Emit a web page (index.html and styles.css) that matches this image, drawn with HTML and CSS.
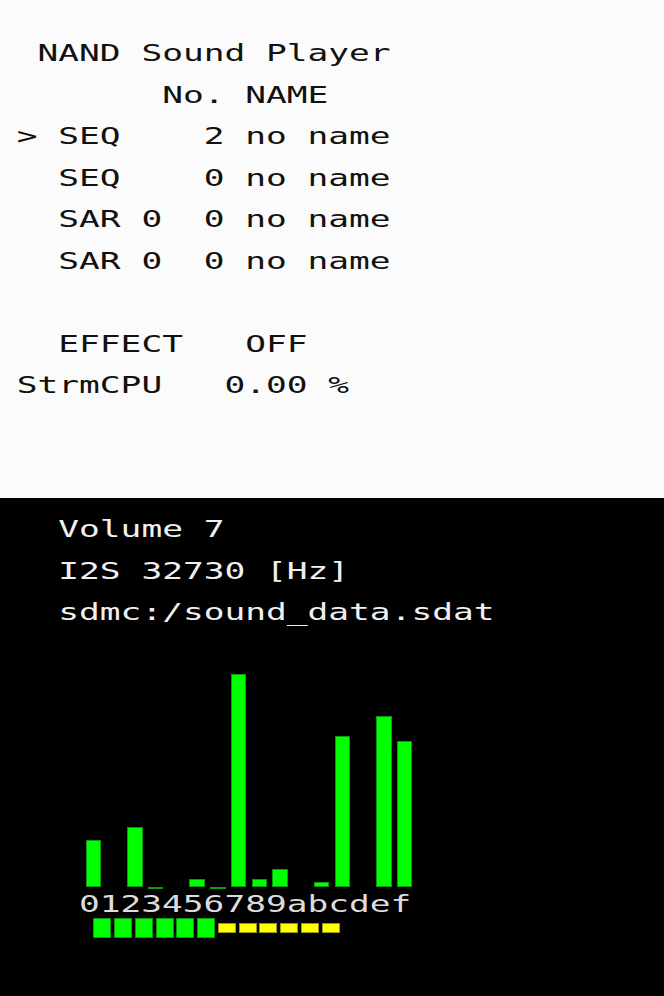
FILE: index.html
```html
<!DOCTYPE html>
<html>
<head>
<meta charset="utf-8">
<title>NAND Sound Player</title>
<link rel="stylesheet" href="styles.css">
</head>
<body>
<div class="screen top">
<pre class="txt">  NAND Sound Player
        No. NAME
 &gt; SEQ    2 no name
   SEQ    0 no name
   SAR 0  0 no name
   SAR 0  0 no name

   EFFECT   OFF
 StrmCPU   0.00 %</pre>
</div>
<div class="screen bottom">
<pre class="txt">   Volume 7
   I2S 32730 [Hz]
   sdmc:/sound_data.sdat</pre>
<div class="chart">
  <div class="bars">
    <div class="bar" style="height:46.7px"></div>
    <div class="bar empty"></div>
    <div class="bar" style="height:59.7px"></div>
    <div class="bar zero"></div>
    <div class="bar empty"></div>
    <div class="bar" style="height:7.8px"></div>
    <div class="bar zero"></div>
    <div class="bar" style="height:212.7px"></div>
    <div class="bar" style="height:7.8px"></div>
    <div class="bar" style="height:18.2px"></div>
    <div class="bar empty"></div>
    <div class="bar" style="height:5.2px"></div>
    <div class="bar" style="height:150.4px"></div>
    <div class="bar empty"></div>
    <div class="bar" style="height:171.2px"></div>
    <div class="bar" style="height:145.3px"></div>
  </div>
  <div class="labels">0123456789abcdef</div>
  <div class="meter">
    <div class="blk on"></div>
    <div class="blk on"></div>
    <div class="blk on"></div>
    <div class="blk on"></div>
    <div class="blk on"></div>
    <div class="blk on"></div>
    <div class="blk off"></div>
    <div class="blk off"></div>
    <div class="blk off"></div>
    <div class="blk off"></div>
    <div class="blk off"></div>
    <div class="blk off"></div>
  </div>
</div>
</div>
</body>
</html>
```
FILE: styles.css
```css
html, body {
  margin: 0;
  padding: 0;
}
body {
  width: 664px;
  height: 996px;
  overflow: hidden;
  font-family: "DejaVu Sans Mono", monospace;
}
.screen {
  height: 498px;
  box-sizing: border-box;
  overflow: hidden;
}
.top {
  background: #fbfbfb;
  color: #111;
  padding-top: 33px;
}
.bottom {
  background: #000;
  color: #f0f0f0;
  padding-top: 11px;
}
.txt {
  width: max-content;
  margin: 0 0 0 -4.5px;
  font-family: "DejaVu Sans Mono", monospace;
  font-size: 23px;
  line-height: 41.5px;
  white-space: pre;
  transform: scaleX(1.5);
  transform-origin: 0 0;
}
.chart {
  display: flex;
  flex-direction: column;
}
.bars {
  display: flex;
  align-items: flex-end;
  height: 253.2px;
  margin-left: 85.7px;
  gap: 5.19px;
}
.bar {
  width: 15.56px;
  flex: none;
  box-sizing: border-box;
  background: #00ff00;
  border: 1px solid #0a9a0a;
}
.bar.empty {
  height: 0;
  border: 0;
  background: none;
}
.bar.zero {
  height: 2.8px;
  margin-bottom: -2.8px;
}
.labels {
  width: max-content;
  margin: 7.3px 0 0 78.5px;
  height: 20px;
  line-height: 20px;
  font-family: "DejaVu Sans Mono", monospace;
  font-size: 23px;
  color: #dcdcdc;
  white-space: pre;
  transform: scaleX(1.5);
  transform-origin: 0 0;
}
.meter {
  display: flex;
  align-items: center;
  gap: 2.75px;
  height: 20px;
  margin: 4.3px 0 0 93.3px;
}
.blk {
  width: 18px;
  flex: none;
  box-sizing: border-box;
}
.blk.on {
  height: 20px;
  background: #00ff00;
  border: 1px solid #0a9a0a;
}
.blk.off {
  height: 10px;
  background: #ffff00;
  border: 1px solid #9a9a0a;
}
```
